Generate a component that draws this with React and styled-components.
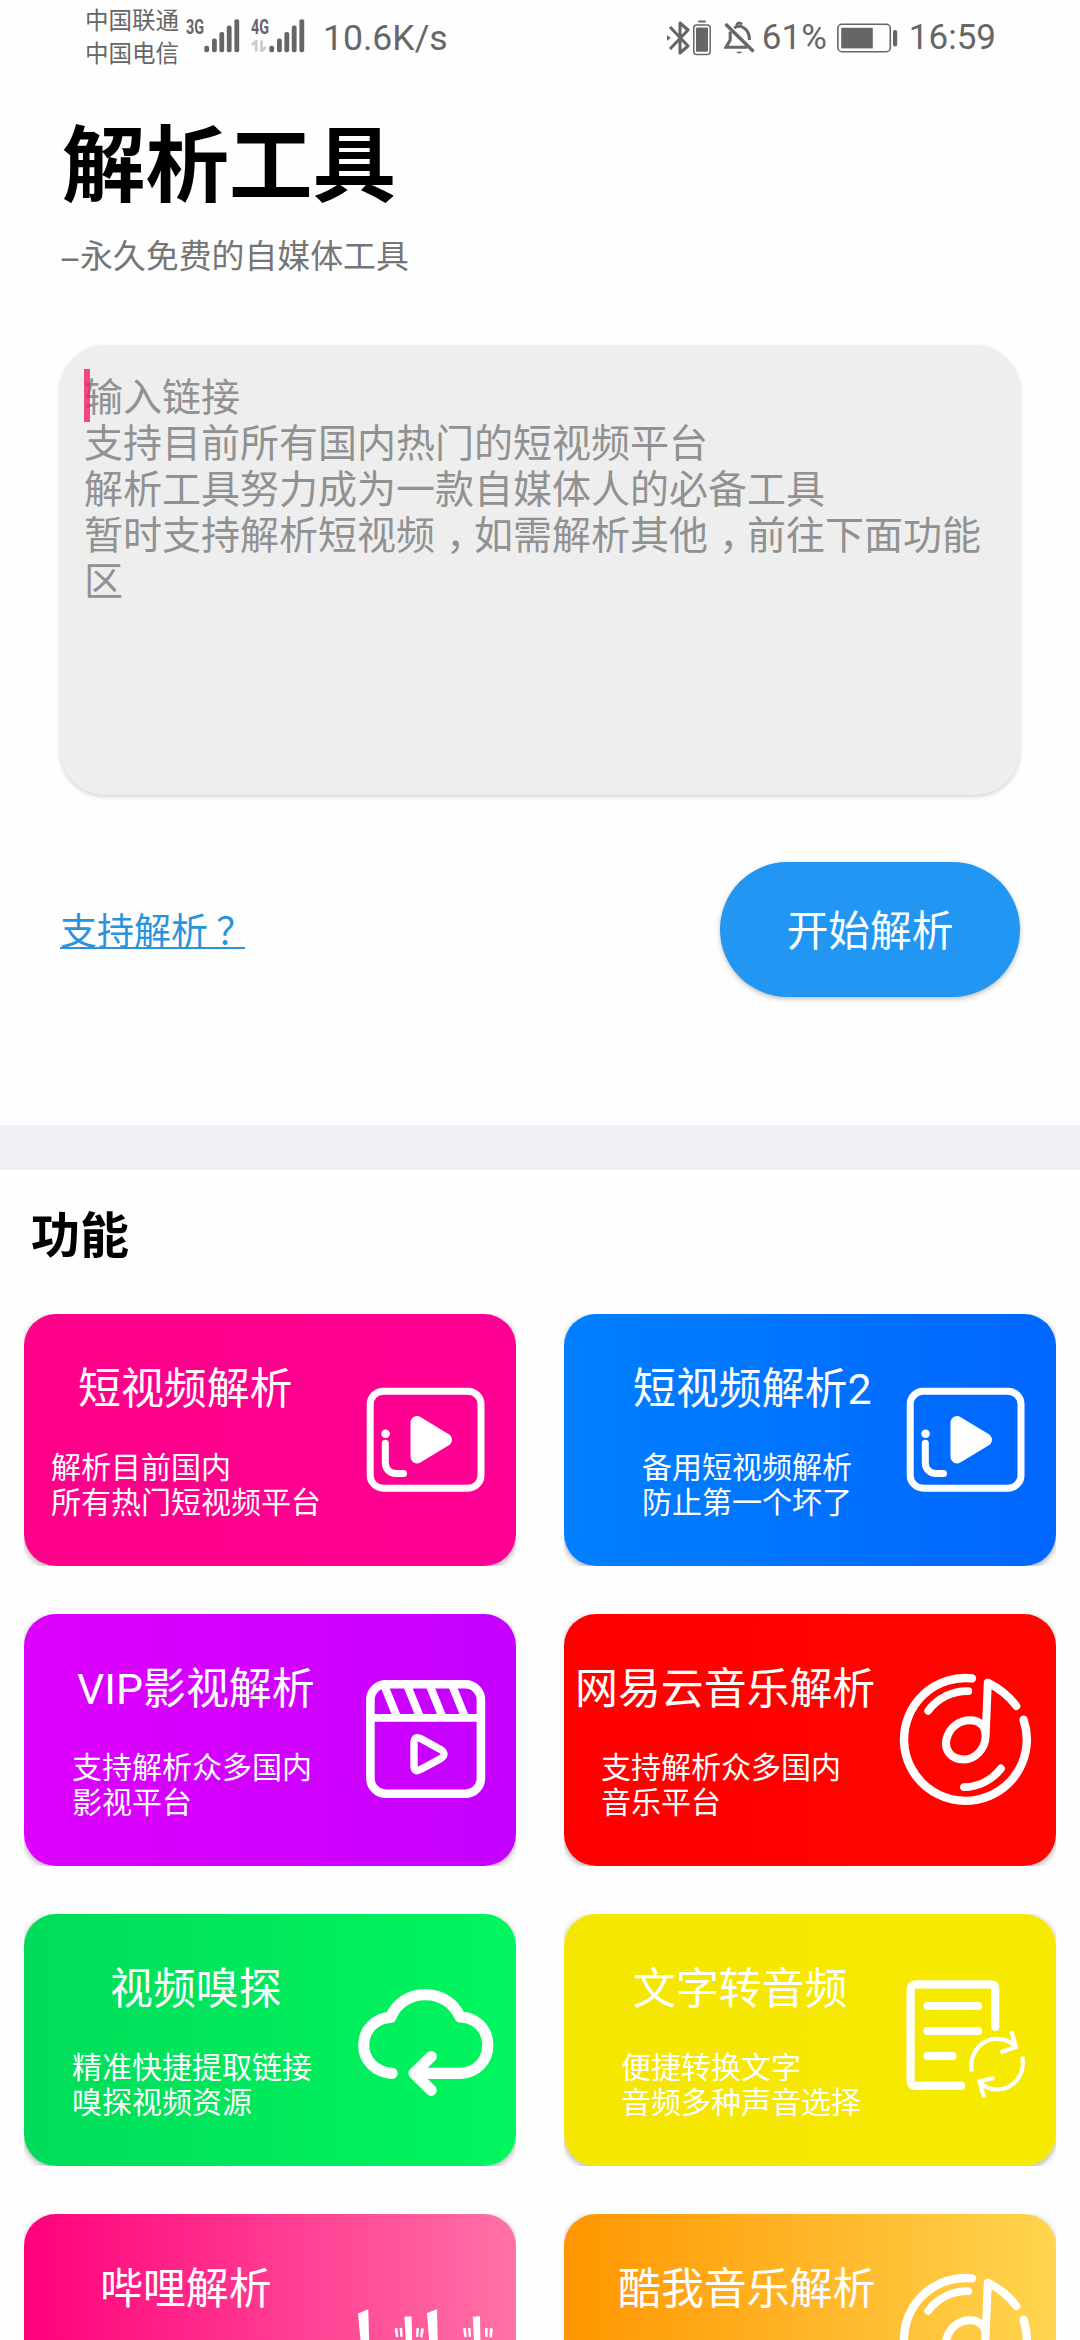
import React from "react";
import styled, { createGlobalStyle } from "styled-components";

const GlobalStyle = createGlobalStyle`
  *, *::before, *::after { box-sizing: border-box; }
  body {
    margin: 0;
    background: #fefefe;
    font-family: Roboto, "Noto Sans CJK SC", sans-serif;
    overflow: hidden;
  }
`;

const Screen = styled.div`
  width: 1080px;
  height: 2340px;
  overflow: hidden;
  background: #fefefe;
  display: flex;
  flex-direction: column;
`;

/* ---------- status bar ---------- */

const StatusBar = styled.header`
  height: 75px;
  flex: none;
  padding: 0 84px 0 85px;
  display: flex;
  justify-content: space-between;
  color: #666;
`;

const StatusGroup = styled.div`
  display: flex;
  height: 75px;
  align-items: center;
`;

const Carriers = styled.div`
  display: flex;
  flex-direction: column;
  width: 101px;
  font-size: 23.5px;
  line-height: 33px;
  padding-top: 1px;
  white-space: nowrap;
`;

const SignalBlock = styled.div`
  display: flex;
  width: ${(p) => p.$width}px;
  height: 33px;
  margin-bottom: 4px;
`;

const NetworkColumn = styled.div`
  width: 18px;
  display: flex;
  flex-direction: column;
  gap: 5px;
`;

const NetworkLabel = styled.span`
  font-size: 20px;
  line-height: 16px;
  font-weight: 700;
  transform: scaleX(0.72);
  transform-origin: left center;
`;

const StatusText = styled.span`
  font-size: ${(p) => p.$size || 35}px;
  line-height: 42px;
  padding-top: 1px;
  white-space: nowrap;
  margin-left: ${(p) => p.$gap || 0}px;
`;

const StatusIcon = styled.svg`
  display: block;
  flex: none;
  margin-left: ${(p) => p.$gap || 0}px;
`;

const SignalBars = () => (
  <StatusIcon width="36" height="34" viewBox="0 0 36 34" fill="#666">
    <rect x="0.3" y="26.7" width="4.8" height="6.6" rx="2" />
    <rect x="8" y="19.5" width="4.8" height="13.8" rx="2" />
    <rect x="15.4" y="13" width="4.8" height="20.3" rx="2" />
    <rect x="22.8" y="6.6" width="4.8" height="26.7" rx="2" />
    <rect x="30.4" y="0.3" width="4.8" height="33" rx="2" />
  </StatusIcon>
);

const DataArrows = () => (
  <StatusIcon width="16" height="12" viewBox="0 0 16 12" fill="none" stroke="#ccc" strokeWidth="2.8">
    <path d="M1 5 L5.2 1 V11.5 M10.5 0.5 V11 L14.8 7" />
  </StatusIcon>
);

const BluetoothIcon = () => (
  <StatusIcon width="23" height="36" viewBox="0 0 23 36" fill="none" stroke="#666" strokeWidth="3.1">
    <path d="M3 7 L21 26 L13 33 V3 L21 10 L3 29" strokeLinejoin="round" />
    <path d="M0 15.3 L3.8 18 L0 20.7Z" fill="#666" stroke="none" />
  </StatusIcon>
);

const DeviceBatteryIcon = () => (
  <StatusIcon $gap={3} width="18" height="36" viewBox="0 0 18 36">
    <path d="M5.3 1.5 H12.7" stroke="#666" strokeWidth="2" />
    <rect x="0.8" y="5" width="16.4" height="29.5" rx="3" fill="none" stroke="#666" strokeWidth="1.5" />
    <rect x="3" y="7.6" width="12" height="24.2" rx="1" fill="#666" />
  </StatusIcon>
);

const MutedBellIcon = () => (
  <StatusIcon $gap={13} width="31" height="36" viewBox="0 0 31 36" fill="none" stroke="#666" strokeWidth="3.1">
    <path d="M1.5 4 L29.5 31.5" strokeWidth="3.4" />
    <path d="M6.2 11.5 V20 L2 27.2 H23" />
    <path d="M10.2 8 Q15 4.5 20 8 Q25.5 11.5 25.5 20" />
    <path d="M12.3 5.5 Q14.5 0.8 18 4.5" strokeWidth="2.6" />
    <path d="M12 31.8 H18.4 Q15.2 35 12 31.8Z" fill="#666" stroke="none" />
  </StatusIcon>
);

const BatteryIcon = () => (
  <StatusIcon $gap={10} width="61" height="30" viewBox="0 0 61 30">
    <rect x="0.9" y="1.3" width="52.4" height="27.4" rx="4" fill="none" stroke="#666" strokeWidth="1.6" />
    <rect x="4.2" y="4.8" width="31.6" height="20.6" fill="#666" />
    <rect x="56" y="7" width="4.2" height="16.5" rx="2" fill="#666" />
  </StatusIcon>
);

/* ---------- hero ---------- */

const Hero = styled.section`
  flex: none;
  height: 1050px;
  padding: 42px 60px 0;
  display: flex;
  flex-direction: column;
`;

const AppTitle = styled.h1`
  margin: 0;
  padding-left: 2px;
  font-size: 83.5px;
  line-height: 100px;
  font-weight: 700;
  color: #000;
`;

const Tagline = styled.p`
  margin: 20px 0 0;
  height: 40px;
  display: flex;
  font-size: 32.9px;
  line-height: 40px;
  color: #757575;
`;

const Dash = styled.span`
  padding-top: 3px;
  width: 20px;
  font-size: 34px;
  text-indent: -1px;
`;

const LinkInput = styled.div`
  position: relative;
  margin-top: 68px;
  height: 450px;
  flex: none;
  padding: 30px 24px;
  border-radius: 45px;
  background: #eee;
  box-shadow: 0 2px 4px rgba(0, 0, 0, 0.17);
  font-size: 39px;
  line-height: 46px;
  color: #919191;
`;

const HintLine = styled.div`
  white-space: nowrap;
`;

const Caret = styled.span`
  position: absolute;
  left: 24px;
  top: 24px;
  width: 6px;
  height: 53px;
  background: rgba(240, 30, 105, 0.8);
`;

const Comma = styled.span`
  display: inline-block;
  width: 1em;
  padding-left: 0.28em;
  font-feature-settings: "halt";
`;

const QuestionMark = styled.span`
  display: inline-block;
  width: 1em;
  text-indent: 0.22em;
`;

const Actions = styled.div`
  margin-top: 67px;
  display: flex;
  align-items: center;
  justify-content: space-between;
`;

const HelpLink = styled.a`
  font-size: 37px;
  line-height: 44px;
  color: #2b93dc;
  border-bottom: 2px solid #2b93dc;
  height: 38px;
  padding-top: 8px;
  display: flex;
  align-items: center;
`;

const ParseButton = styled.button`
  width: 300px;
  height: 135px;
  border: 0;
  border-radius: 68px;
  background: #2196f3;
  color: #fff;
  font: inherit;
  font-size: 41.7px;
  line-height: 50px;
  padding: 5px 0 0;
  box-shadow: 0 2px 5px rgba(0, 0, 0, 0.25);
`;

const Divider = styled.div`
  height: 45px;
  flex: none;
  background: #efeff4;
`;

/* ---------- feature grid ---------- */

const SectionTitle = styled.h2`
  margin: 37px 0 0;
  padding-left: 31px;
  font-size: 49px;
  line-height: 60px;
  font-weight: 700;
  color: #000;
`;

const Grid = styled.div`
  margin-top: 47px;
  padding: 0 24px;
  display: grid;
  grid-template-columns: 492px 492px;
  grid-auto-rows: 252px;
  gap: 48px;
`;

const CardClip = styled.div`
  overflow: hidden;
`;

const Card = styled.article`
  height: 252px;
  border-radius: 32px;
  display: flex;
  justify-content: space-between;
  align-items: center;
  padding-right: 15px;
  color: #fff;
  background: linear-gradient(90deg, ${(p) => p.$from}, ${(p) => p.$to});
  box-shadow: 0 2px 6px rgba(0, 0, 0, 0.35);
`;

const CardText = styled.div`
  height: 252px;
  padding-top: 50px;
  white-space: nowrap;
`;

const CardTitle = styled.h3`
  margin: 0 0 36px;
  padding-left: ${(p) => p.$x}px;
  font-size: 42.9px;
  line-height: 50px;
  font-weight: 400;
`;

const CardDescription = styled.p`
  margin: 0;
  padding-left: ${(p) => p.$x}px;
  font-size: 30px;
  line-height: 35px;
  white-space: pre-line;
`;

const FeatureSvg = styled.svg`
  display: block;
  flex: none;
  width: 150px;
  height: 150px;
  fill: none;
  stroke: #fff;
  stroke-width: ${(p) => p.$stroke}px;
  stroke-linecap: round;
  stroke-linejoin: round;
`;

const PlayIcon = () => (
  <FeatureSvg viewBox="0 0 150 150" $stroke={7}>
    <rect x="19.2" y="26.2" width="110.8" height="97" rx="13" />
    <circle cx="34.6" cy="68.7" r="4.3" fill="#fff" stroke="none" />
    <path d="M34.3 78.3 V98 a10.5 10.5 0 0 0 10.5 10.5 H52.5" />
    <path d="M66 57.5 V92 L94.5 74.8 Z" fill="#fff" strokeWidth="13" />
  </FeatureSvg>
);

const ClapperIcon = () => (
  <FeatureSvg viewBox="0 0 150 150" $stroke={8.6}>
    <rect x="19.4" y="19.3" width="110.5" height="109.4" rx="15.5" />
    <path d="M20 52.8 H129" strokeWidth="7.8" />
    <path
      d="M33 20 L46 52 M56 20 L69 52 M78.5 20 L91.5 52 M101 20 L114 52"
      strokeWidth="8"
      strokeLinecap="butt"
    />
    <path
      d="M63 78.5 V100.5 Q63 108.5 70 104.2 L89.5 93.8 Q96.5 89 89.5 84.4 L70 73.8 Q63 70 63 78.5Z"
      strokeWidth="7.4"
    />
  </FeatureSvg>
);

const MusicIcon = () => (
  <FeatureSvg viewBox="0 0 150 150" $stroke={8.4}>
    <path d="M81 13.4 A61.4 61.4 0 1 0 132.6 54.8" />
    <path d="M77.3 26.2 A48.5 48.5 0 0 0 37.2 45.8" strokeWidth="7.8" />
    <path d="M73 122.2 A48 48 0 0 0 110 103.5" strokeWidth="7.8" />
    <path
      d="M125.3 41 C118 31 108.5 23.5 96.8 17.6 L94.6 71 C94.4 84 84 94.5 73 94.5 C60 94.5 53 85 55.5 74 C58.5 62 68.5 55.2 79 55.2 C88.5 55.2 94.6 61 94.6 71"
      strokeWidth="8"
    />
  </FeatureSvg>
);

const CloudIcon = () => (
  <FeatureSvg viewBox="0 0 150 150" $stroke={11.2}>
    <path d="M41 108.3 C24 107.3 12.7 95 12.7 80 C12.7 65 24.5 52.7 39.8 52.3 C45 38.5 58.5 29.6 74.3 29.6 C90 29.6 103.5 38.5 109 52 C124.8 52 136.8 64.5 136.8 80 C136.8 96 125 108.3 109 108.3 H64" />
    <path d="M80.2 91.5 L63 108.3 L80.2 125.3" />
  </FeatureSvg>
);

const TextToAudioIcon = () => (
  <FeatureSvg viewBox="0 0 150 150" $stroke={8.2}>
    <path d="M104.2 62 V24 q0 -4.6 -4.6 -4.6 H25 q-5.4 0 -5.4 5.4 V115.5 q0 5.4 5.4 5.4 H70" />
    <path d="M36.5 41 H87 M36.5 66 H87 M36.5 91 H61.5" />
    <g strokeWidth="4.2" strokeLinecap="butt">
      <path d="M81 106.5 C77.5 92 87.5 74.5 105 73.8 C113 73.5 119.5 76.5 124.5 81.5" />
      <path d="M131.3 91.5 C134.5 108 123.5 124 107 124.5 C100 124.7 93 122 88.6 116.5" />
      <path d="M120.3 66 L125 82 L109.5 87.2" />
      <path d="M103.3 113 L88.3 116.3 L93.2 132.5" />
    </g>
  </FeatureSvg>
);

const BiliIcon = () => (
  <FeatureSvg viewBox="0 0 150 150" $stroke={0}>
    <g fill="#fff">
      <path d="M7 48.5 L17.3 44.2 L19 112 L13 112Z" />
      <path d="M53.4 51.8 L60.6 51.2 L62 112 L57 112Z" />
      <path d="M76 48 L86 44.2 L87.5 112 L81 112Z" />
      <path d="M121.8 51.8 L129 51.2 L130 112 L125 112Z" />
      <path d="M43.6 63.5 L46.4 63 L47.4 72 L45 72.2Z M48.6 63 L51.2 62.8 L51.6 71.8 L49.4 72Z" />
      <path d="M65.4 63 L68 63 L67.4 72 L65 71.8Z M70 63.3 L73 63.8 L71.4 72.4 L69.2 72.2Z" />
      <path d="M112 63.5 L114.8 63 L115.8 72 L113.4 72.2Z M117 63 L119.6 62.8 L120 71.8 L117.8 72Z" />
      <path d="M134 63 L136.6 63 L136.6 72 L134.2 71.8Z M138.8 63.3 L142 63.5 L140.8 72.4 L138.6 72.2Z" />
    </g>
  </FeatureSvg>
);

const features = [
  { title: "短视频解析", tx: 54, text: "解析目前国内\n所有热门短视频平台", dx: 27, from: "#ff0089", to: "#ff0095", Icon: PlayIcon },
  { title: "短视频解析2", tx: 69, text: "备用短视频解析\n防止第一个坏了", dx: 78, from: "#0080ff", to: "#0066ff", Icon: PlayIcon },
  { title: "VIP影视解析", tx: 53, text: "支持解析众多国内\n影视平台", dx: 48, from: "#de00ff", to: "#c400ff", Icon: ClapperIcon },
  { title: "网易云音乐解析", tx: 11, text: "支持解析众多国内\n音乐平台", dx: 37, from: "#ff0000", to: "#ff0500", Icon: MusicIcon },
  { title: "视频嗅探", tx: 86, text: "精准快捷提取链接\n嗅探视频资源", dx: 48, from: "#00dc5a", to: "#00f65e", Icon: CloudIcon },
  { title: "文字转音频", tx: 69, text: "便捷转换文字\n音频多种声音选择", dx: 57, from: "#f5e600", to: "#f7ea00", Icon: TextToAudioIcon },
  { title: "哔哩解析", tx: 76, text: "", dx: 48, from: "#ff007b", to: "#ff72a6", Icon: BiliIcon },
  { title: "酷我音乐解析", tx: 54, text: "", dx: 48, from: "#ff9600", to: "#ffd54f", Icon: MusicIcon },
];

export default function App() {
  return (
    <Screen>
      <GlobalStyle />
      <StatusBar>
        <StatusGroup>
          <Carriers>
            <span>中国联通</span>
            <span>中国电信</span>
          </Carriers>
          <SignalBlock $width={65}>
            <NetworkColumn>
              <NetworkLabel>3G</NetworkLabel>
            </NetworkColumn>
            <SignalBars />
          </SignalBlock>
          <SignalBlock $width={72}>
            <NetworkColumn>
              <NetworkLabel>4G</NetworkLabel>
              <DataArrows />
            </NetworkColumn>
            <SignalBars />
          </SignalBlock>
          <StatusText $size={35.6}>10.6K/s</StatusText>
        </StatusGroup>
        <StatusGroup>
          <BluetoothIcon />
          <DeviceBatteryIcon />
          <MutedBellIcon />
          <StatusText $gap={7}>61%</StatusText>
          <BatteryIcon />
          <StatusText $gap={11}>16:59</StatusText>
        </StatusGroup>
      </StatusBar>

      <Hero>
        <AppTitle>解析工具</AppTitle>
        <Tagline>
          <Dash>–</Dash>
          <span>永久免费的自媒体工具</span>
        </Tagline>
        <LinkInput>
          <HintLine>输入链接</HintLine>
          <HintLine>支持目前所有国内热门的短视频平台</HintLine>
          <HintLine>解析工具努力成为一款自媒体人的必备工具</HintLine>
          <HintLine>
            暂时支持解析短视频<Comma>，</Comma>如需解析其他<Comma>，</Comma>前往下面功能
          </HintLine>
          <HintLine>区</HintLine>
          <Caret />
        </LinkInput>
        <Actions>
          <HelpLink>
            支持解析<QuestionMark>？</QuestionMark>
          </HelpLink>
          <ParseButton>开始解析</ParseButton>
        </Actions>
      </Hero>

      <Divider />

      <SectionTitle>功能</SectionTitle>
      <Grid>
        {features.map(({ title, tx, text, dx, from, to, Icon }) => (
          <CardClip key={title}>
            <Card $from={from} $to={to}>
              <CardText>
                <CardTitle $x={tx}>{title}</CardTitle>
                <CardDescription $x={dx}>{text}</CardDescription>
              </CardText>
              <Icon />
            </Card>
          </CardClip>
        ))}
      </Grid>
    </Screen>
  );
}
